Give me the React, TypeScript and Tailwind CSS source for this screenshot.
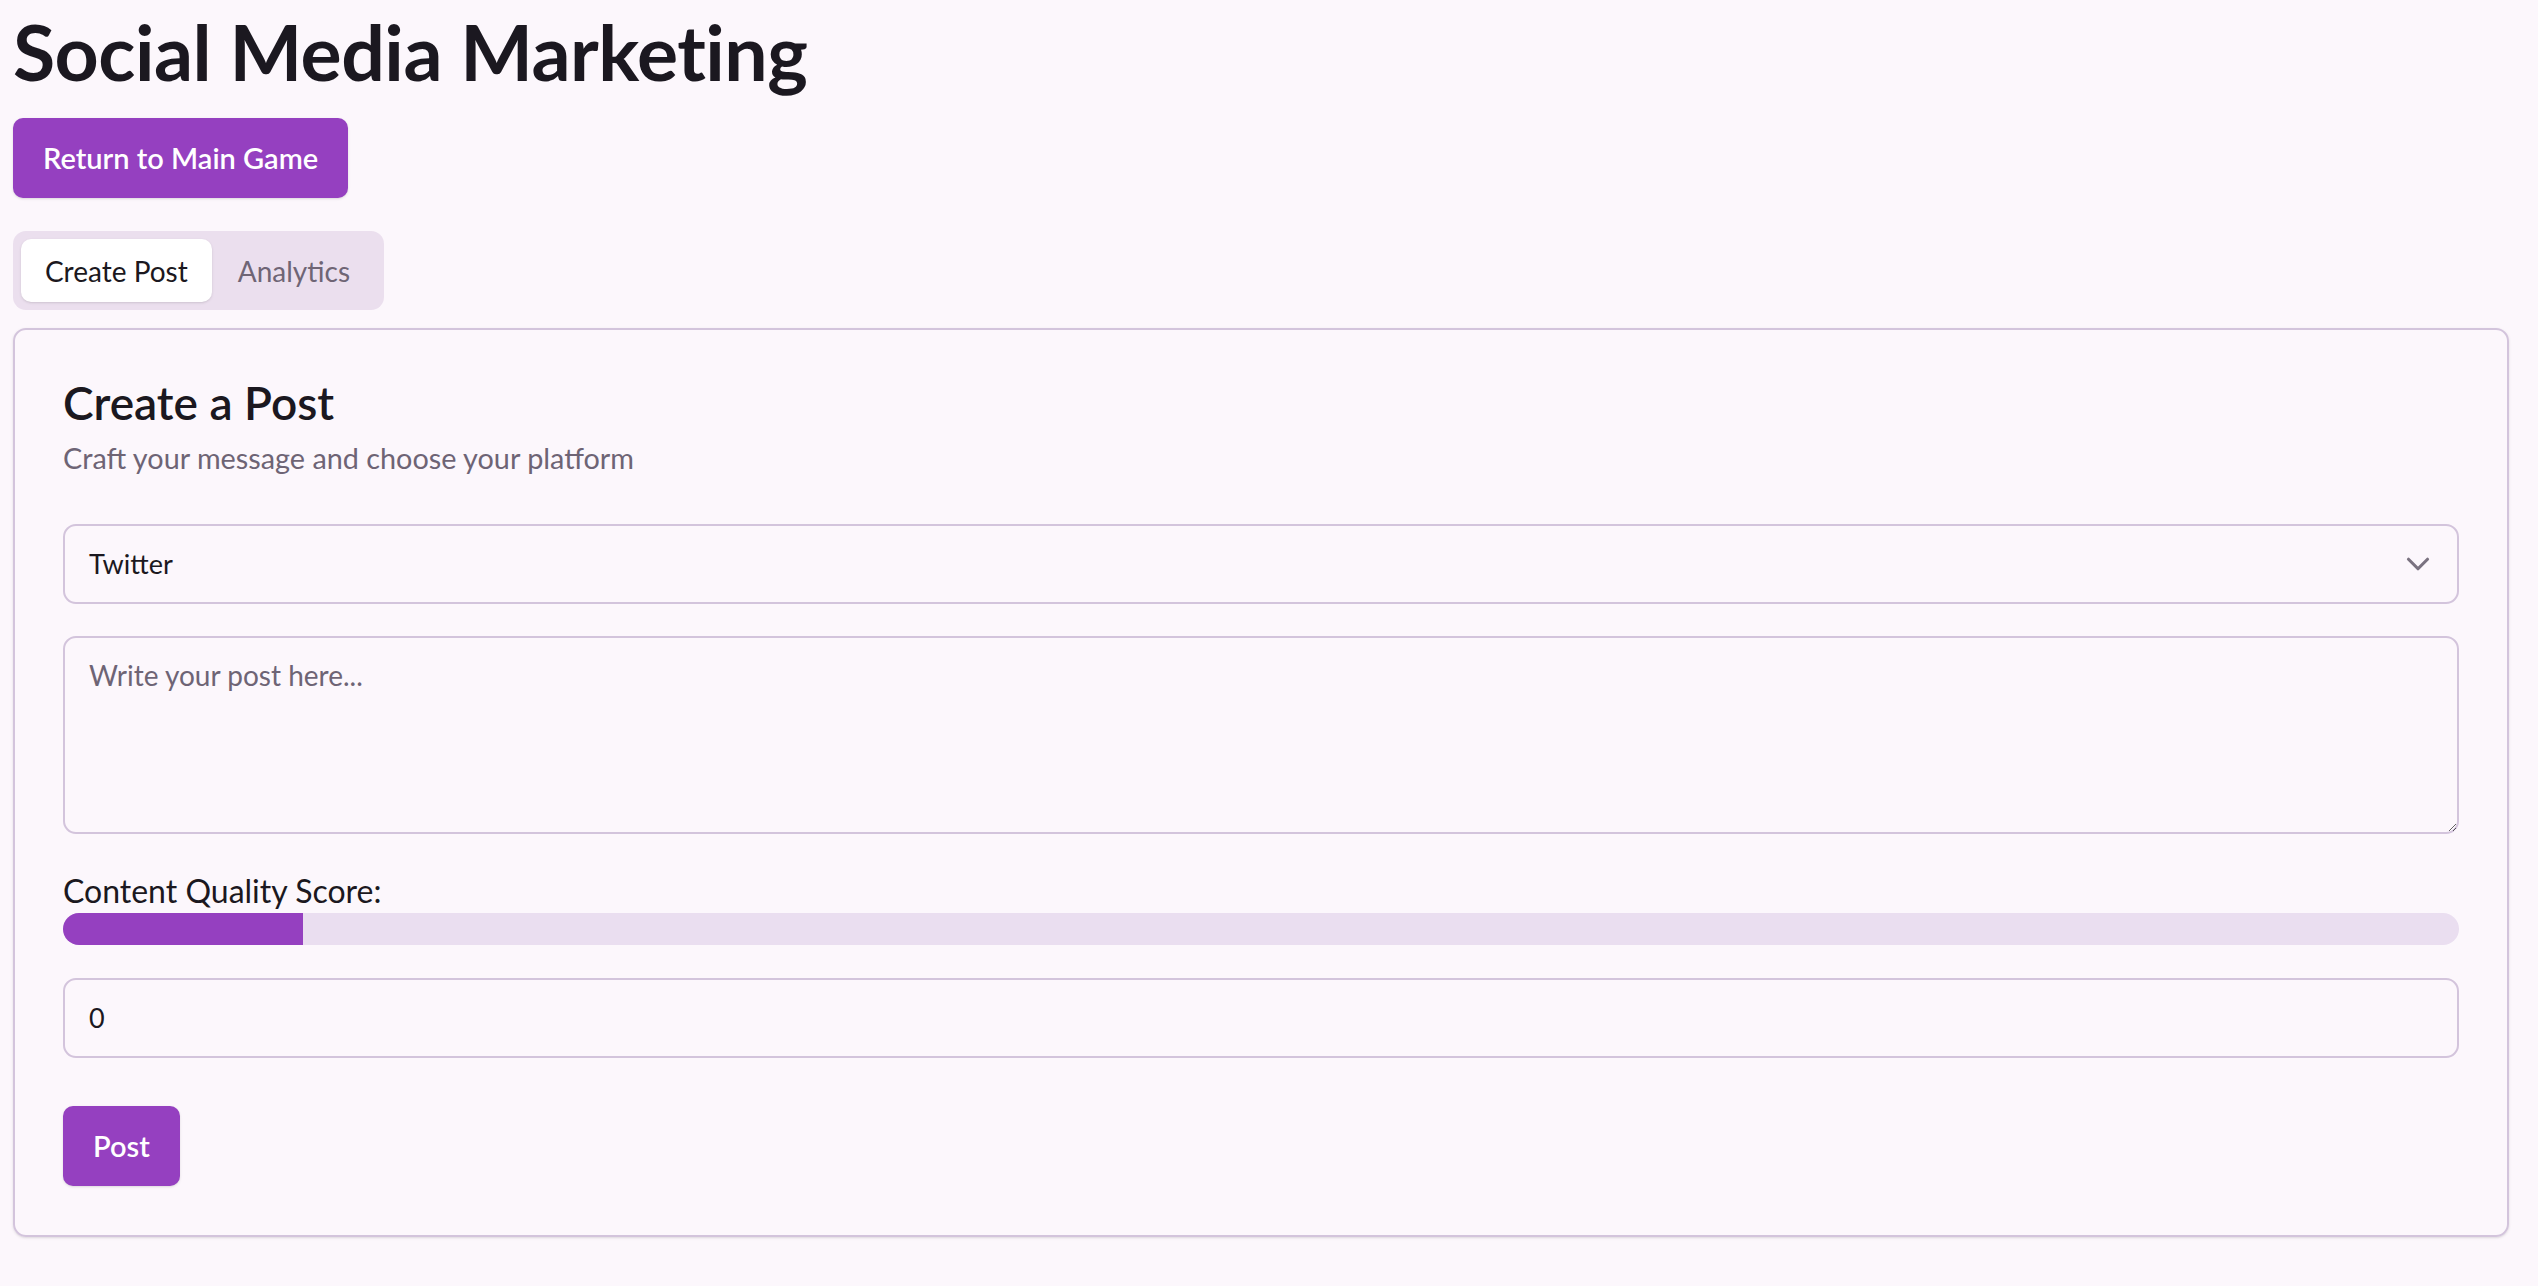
import { useState } from 'react';
import { ChevronDown } from 'lucide-react';

const font = { fontFamily: 'Lato, "Noto Sans", sans-serif' };

export default function App() {
  const [tab, setTab] = useState<'create' | 'analytics'>('create');
  const [post, setPost] = useState('');
  const score = 10;

  return (
    <div className="min-h-screen bg-[#fcf7fc] pl-[13px] pr-[29px] py-[13px] text-[#1b1820] flex flex-col items-start" style={font}>
      <h1 className="text-[77px] leading-[77px] font-bold tracking-[-0.5px]">Social Media Marketing</h1>

      <button className="mt-[28px] h-[80px] px-[30px] rounded-[10px] bg-[#9540c0] text-white text-[29px] font-semibold shadow-sm">
        Return to Main Game
      </button>

      {/* tabs */}
      <div className="mt-[33px] flex items-center h-[79px] p-[8px] rounded-[13px] bg-[#ebdfee]">
        <button
          onClick={() => setTab('create')}
          className={`h-[63px] px-[24px] rounded-[10px] text-[28px] ${tab === 'create' ? 'bg-white text-[#1b1820] shadow-sm' : 'text-[#6f6575]'}`}
        >
          Create Post
        </button>
        <button
          onClick={() => setTab('analytics')}
          className={`h-[63px] px-[26px] rounded-[10px] text-[28px] ${tab === 'analytics' ? 'bg-white text-[#1b1820] shadow-sm' : 'text-[#6f6575]'}`}
        >
          Analytics
        </button>
      </div>

      <div className="mt-[18px] self-stretch rounded-[13px] border-2 border-[#d3c4dc] shadow-sm px-[48px] pt-[44px] pb-[49px]">
        <h2 className="text-[46px] leading-[58px] font-semibold">Create a Post</h2>
        <p className="mt-[6px] text-[28.8px] leading-[40px] text-[#6e6475]">Craft your message and choose your platform</p>

        <div className="mt-[46px] flex flex-col">
          <div className="relative h-[80px] rounded-[13px] border-2 border-[#d3c4dc] flex items-center px-[24px]">
            <span className="text-[27px]">Twitter</span>
            <ChevronDown className="absolute right-[20px] top-1/2 -translate-y-1/2 text-[#7a7280]" size={38} strokeWidth={2} />
          </div>

          <textarea
            value={post}
            onChange={(e) => setPost(e.target.value)}
            placeholder="Write your post here..."
            className="mt-[32px] h-[198px] rounded-[13px] border-2 border-[#d3c4dc] bg-transparent px-[24px] py-[16px] text-[28px] placeholder:text-[#6e6475] outline-none"
          />

          <label className="mt-[37px] text-[32px] leading-[40px]">Content Quality Score:</label>
          <div className="mt-[2px] h-[32px] rounded-full bg-[#eadef0] overflow-hidden">
            <div className="h-full bg-[#9540c0]" style={{ width: `${score}%` }} />
          </div>

          <div className="mt-[33px] h-[80px] rounded-[13px] border-2 border-[#d3c4dc] flex items-center px-[24px]">
            <span className="text-[27px]">0</span>
          </div>

          <div className="mt-[48px]">
            <button className="h-[80px] px-[30px] rounded-[10px] bg-[#9540c0] text-white text-[29px] font-semibold shadow-sm">
              Post
            </button>
          </div>
        </div>
      </div>
    </div>
  );
}
